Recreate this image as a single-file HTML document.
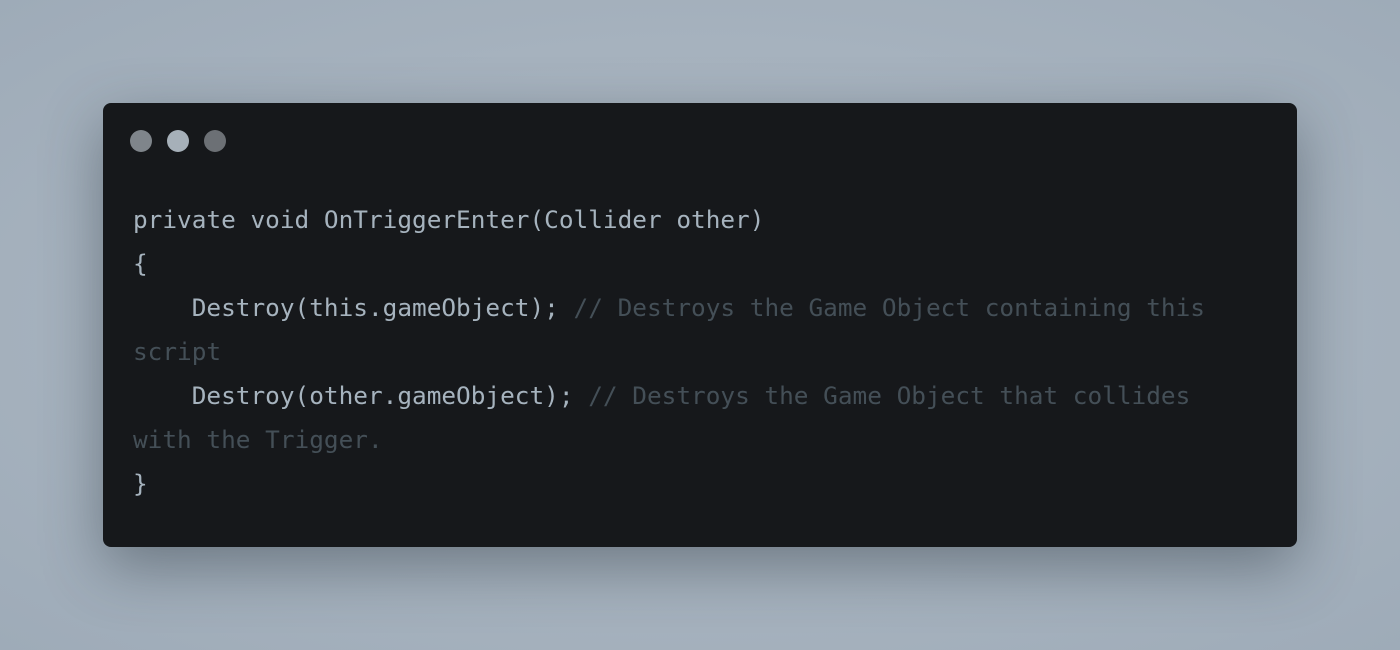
<!DOCTYPE html>
<html><head><meta charset="utf-8"><style>
html,body{margin:0;padding:0}
body{width:1400px;height:650px;overflow:hidden;background:radial-gradient(ellipse at center,#b2bcc6 0%,#a6b2be 60%,#9eabb8 100%);position:relative}
.card{position:absolute;left:103px;top:103px;width:1194px;height:444px;background:#16181b;border-radius:8px;box-shadow:0 20px 60px rgba(40,50,60,0.45)}
.dot{position:absolute;top:130px;width:22px;height:22px;border-radius:50%}
pre{position:absolute;left:133px;top:198px;margin:0;font-family:"DejaVu Sans Mono","Liberation Mono",monospace;font-size:24.4px;line-height:44px;color:#a6b3be;white-space:pre}
.c{color:#444f57}
</style></head><body>
<div class="card"></div>
<div class="dot" style="left:130px;background:#7f858b"></div>
<div class="dot" style="left:167px;background:#a6b0b9"></div>
<div class="dot" style="left:204px;background:#6c7075"></div>
<pre>private void OnTriggerEnter(Collider other)
{
    Destroy(this.gameObject); <span class="c">// Destroys the Game Object containing this</span>
<span class="c">script</span>
    Destroy(other.gameObject); <span class="c">// Destroys the Game Object that collides</span>
<span class="c">with the Trigger.</span>
}</pre>
</body></html>
